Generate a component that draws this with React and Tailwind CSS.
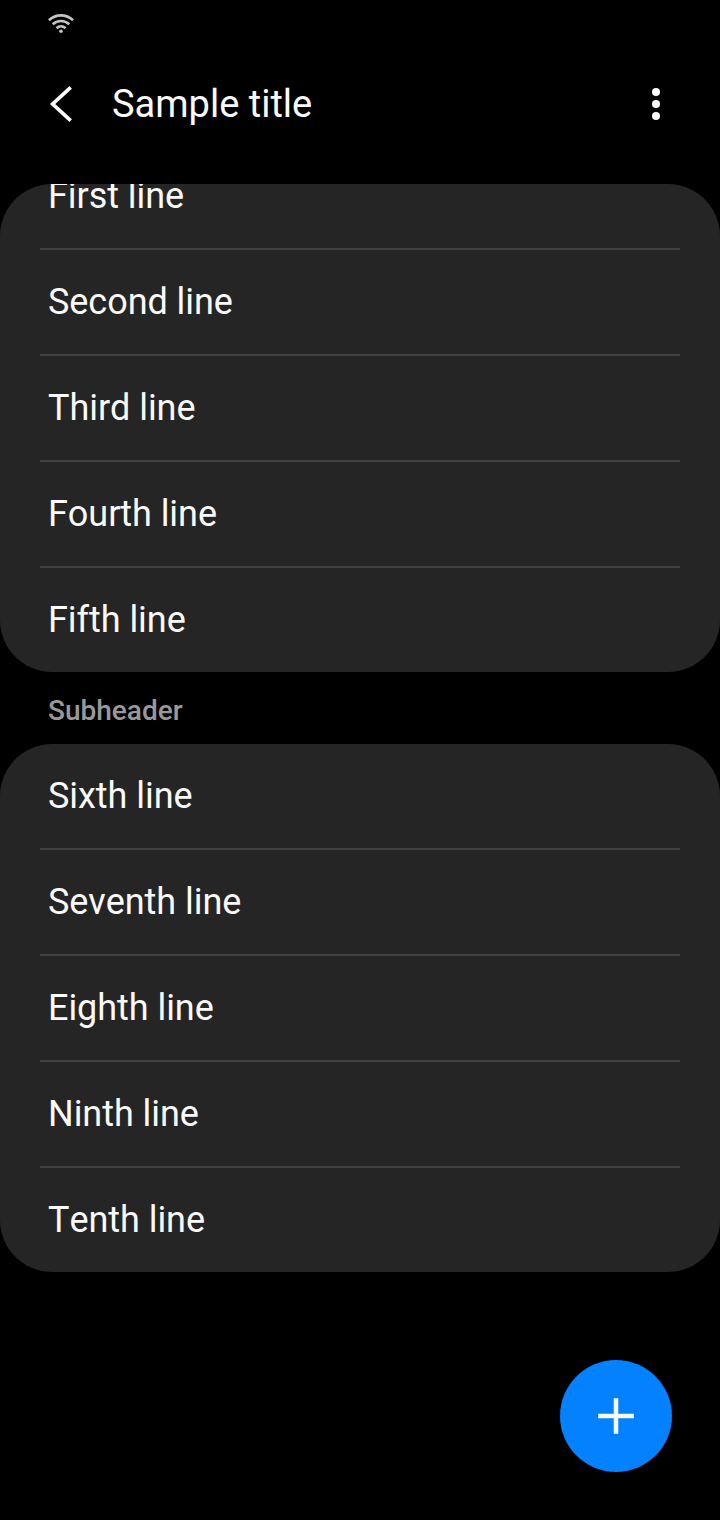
const first = ['First line', 'Second line', 'Third line', 'Fourth line', 'Fifth line'];
const second = ['Sixth line', 'Seventh line', 'Eighth line', 'Ninth line', 'Tenth line'];

function Rows({ items }) {
  return (
    <ul className="w-full shrink-0 divide-y-2 divide-[#404040] px-10 text-[36px] leading-[42px] tracking-[-0.05px] [font-kerning:none]">
      {items.map((label) => (
        <li key={label} className="box-content flex h-[104px] items-center px-2">
          {label}
        </li>
      ))}
    </ul>
  );
}

export default function App() {
  return (
    <div className="relative flex h-[1520px] w-[720px] flex-col overflow-hidden bg-black font-['Roboto',sans-serif] text-[#fafafa]">
      <div className="flex h-12 items-center px-12">
        <svg width="26" height="20" viewBox="0 0 26 20" fill="none" stroke="#c4c4c4" strokeWidth="2.6">
          <path d="M.9 6.300C7.900-.3 18.100-.3 25.100 6.300M4.700 10.300c4.700-4.500 11.900-4.500 16.600 0M8.500 14.200c2.600-2.400 6.400-2.400 9 0" />
          <circle cx="13" cy="17.300" r="1.800" fill="#c4c4c4" stroke="none" />
        </svg>
      </div>
      <header className="flex h-28 items-center justify-between pl-12 pr-[60px]">
        <div className="flex items-center gap-10">
          <svg width="24" height="36" viewBox="0 0 24 36" fill="none" stroke="#fafafa" strokeWidth="3.7">
            <path d="M22.700 1.400 4.700 18l18 16.600" />
          </svg>
          <h1 className="text-[38px] leading-[44px]">Sample title</h1>
        </div>
        <svg width="8" height="32" viewBox="0 0 8 32" fill="#fafafa">
          <circle cx="4" cy="4" r="4" />
          <circle cx="4" cy="16" r="4" />
          <circle cx="4" cy="28" r="4" />
        </svg>
      </header>
      <section className="mt-6 flex h-[488px] shrink-0 flex-col justify-end overflow-hidden rounded-[52px] bg-[#252525]">
        <Rows items={first} />
      </section>
      <h2 className="flex h-[72px] shrink-0 items-center px-12 pt-1.5 text-[28px] font-medium text-[#999]">Subheader</h2>
      <section className="shrink-0 overflow-hidden rounded-[52px] bg-[#252525]">
        <Rows items={second} />
      </section>
      <button aria-label="Add" className="absolute bottom-12 right-12 flex size-28 items-center justify-center rounded-full bg-[#0381fe]">
        <svg width="36" height="36" viewBox="0 0 36 36" stroke="#fafafa" strokeWidth="4.5">
          <path d="M18 .2v35.600M.2 18h35.600" />
        </svg>
      </button>
    </div>
  );
}
